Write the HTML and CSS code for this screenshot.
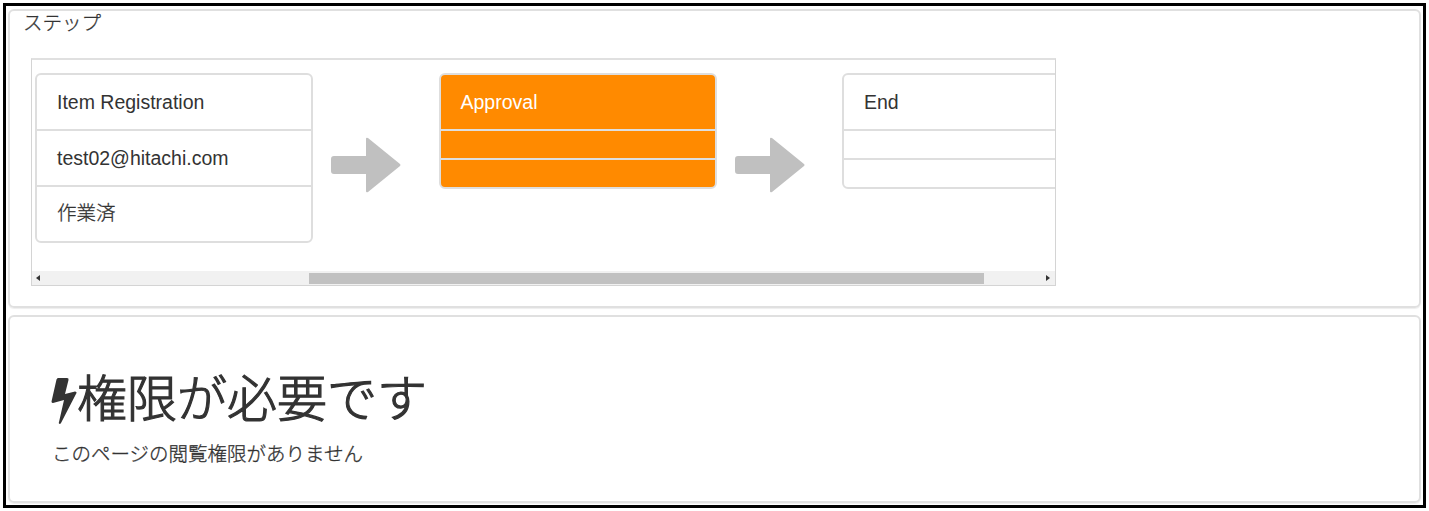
FILE: index.html
```
<!DOCTYPE html>
<html lang="ja">
<head>
<meta charset="utf-8">
<title>ステップ</title>
<link rel="stylesheet" href="styles.css">
</head>
<body>
<main class="frame">
  <section class="panel steps">
    <h2 class="steps-title">ステップ</h2>
    <div class="scroller">
      <div class="track">
        <div class="card">
          <div class="row head">Item Registration</div>
          <div class="row">test02@hitachi.com</div>
          <div class="row last jp">作業済</div>
        </div>
        <svg class="arrow" viewBox="0 0 70 56"><path d="M3 19H35V2Q35 0 37 1L69 27Q70 28 69 29L37 55Q35 56 35 54V37H3Q0 37 0 34V22Q0 19 3 19Z"/></svg>
        <div class="card active">
          <div class="row head">Approval</div>
          <div class="row empty"></div>
          <div class="row empty last"></div>
        </div>
        <svg class="arrow" viewBox="0 0 70 56"><path d="M3 19H35V2Q35 0 37 1L69 27Q70 28 69 29L37 55Q35 56 35 54V37H3Q0 37 0 34V22Q0 19 3 19Z"/></svg>
        <div class="card">
          <div class="row head">End</div>
          <div class="row empty"></div>
          <div class="row empty last"></div>
        </div>
      </div>
      <div class="scrollbar">
        <svg class="tip" viewBox="0 0 4 6"><path d="M4 0V6L0 3Z"/></svg>
        <div class="thumb"></div>
        <svg class="tip" viewBox="0 0 4 6"><path d="M0 0V6L4 3Z"/></svg>
      </div>
    </div>
  </section>
  <section class="panel notice">
    <h1 class="notice-title"><svg class="bolt" viewBox="0 0 26 48"><path d="M7 1H16Q18 1 17.500 3L14 17L24 14.500Q26 14.500 25.500 16L10 46Q9 47.500 8 46.500Q7.500 46 8 45L13 23L2 26Q.500 26 .500 24.500L5.500 2.500Q6 1 7 1Z"/></svg><span>権限が必要です</span></h1>
    <p class="notice-text">このページの閲覧権限がありません</p>
  </section>
</main>
</body>
</html>
```
FILE: styles.css
```
* { box-sizing: border-box; }
body {
  margin: 0;
  height: 511px;
  padding: 3px;
  background: #fff;
  color: #333;
  font: 19.500px/28px "Liberation Sans", "Noto Sans CJK JP", sans-serif;
  overflow: hidden;
}
h1, h2, p { margin: 0; }
.frame {
  display: flex;
  flex-direction: column;
  gap: 7px;
  height: 505px;
  width: 1423px;
  border: 3px solid #000;
  padding: 3px 2px 2px;
}
.panel {
  border: 2px solid #e0e0e0;
  border-radius: 6px;
  box-shadow: 0 1px 1px #eee;
}
.steps { height: 299px; flex: none; padding: 0 13px; }
.steps-title {
  height: 47px;
  line-height: 21px;
  font-family: "Noto Sans CJK JP", sans-serif;
  font-size: 19.500px;
  font-weight: 300;
  -webkit-text-stroke: .3px #333;
}
.scroller {
  display: flex;
  flex-direction: column;
  justify-content: space-between;
  width: 1025px;
  height: 228px;
  margin-left: 8px;
  border: 1px solid #d4d4d4;
  border-top: 2px solid #e0e0e0;
  overflow: hidden;
}
.track {
  display: flex;
  align-items: flex-start;
  padding: 13px 0 0 3px;
}
.card {
  flex: none;
  width: 278px;
  border: 2px solid #dedede;
  border-radius: 6px;
  overflow: hidden;
}
.row {
  height: 56px;
  padding: 13px 20px;
  border-bottom: 2px solid #dedede;
}
.row.empty { height: 29px; padding: 0; }
.row.last { height: 54px; padding-top: 11px; border-bottom: 0; }
.row.empty.last { height: 27px; padding: 0; }
.jp {
  font-family: "Noto Sans CJK JP", sans-serif;
  font-weight: 300;
  -webkit-text-stroke: .3px #333;
}
.active { background: #ff8a00; color: #fff; }
.arrow {
  flex: none;
  width: 70px;
  height: 56px;
  margin: 64px 37.500px 0 18px;
  fill: #c0c0c0;
}
.scrollbar {
  display: flex;
  align-items: center;
  height: 14px;
  padding: 0 5px 0 4px;
  background: #f1f1f1;
}
.tip { flex: none; width: 4px; height: 6px; fill: #333; }
.thumb { flex: none; width: 675px; height: 11px; margin: 0 62px 0 269px; background: #c1c1c1; }
.notice { height: 189px; padding: 46px 41px 0; }
.notice-title {
  display: flex;
  align-items: center;
  height: 64px;
  font: 300 50px/64px "Noto Sans CJK JP", sans-serif;
  -webkit-text-stroke: 1.200px #333;
}
.bolt { width: 26px; height: 48px; margin-top: 11px; fill: #333; stroke: none; }
.notice-text {
  margin: 12px 0 0 1px;
  font: 300 19.500px/28px "Noto Sans CJK JP", sans-serif;
  -webkit-text-stroke: .3px #333;
}
```
